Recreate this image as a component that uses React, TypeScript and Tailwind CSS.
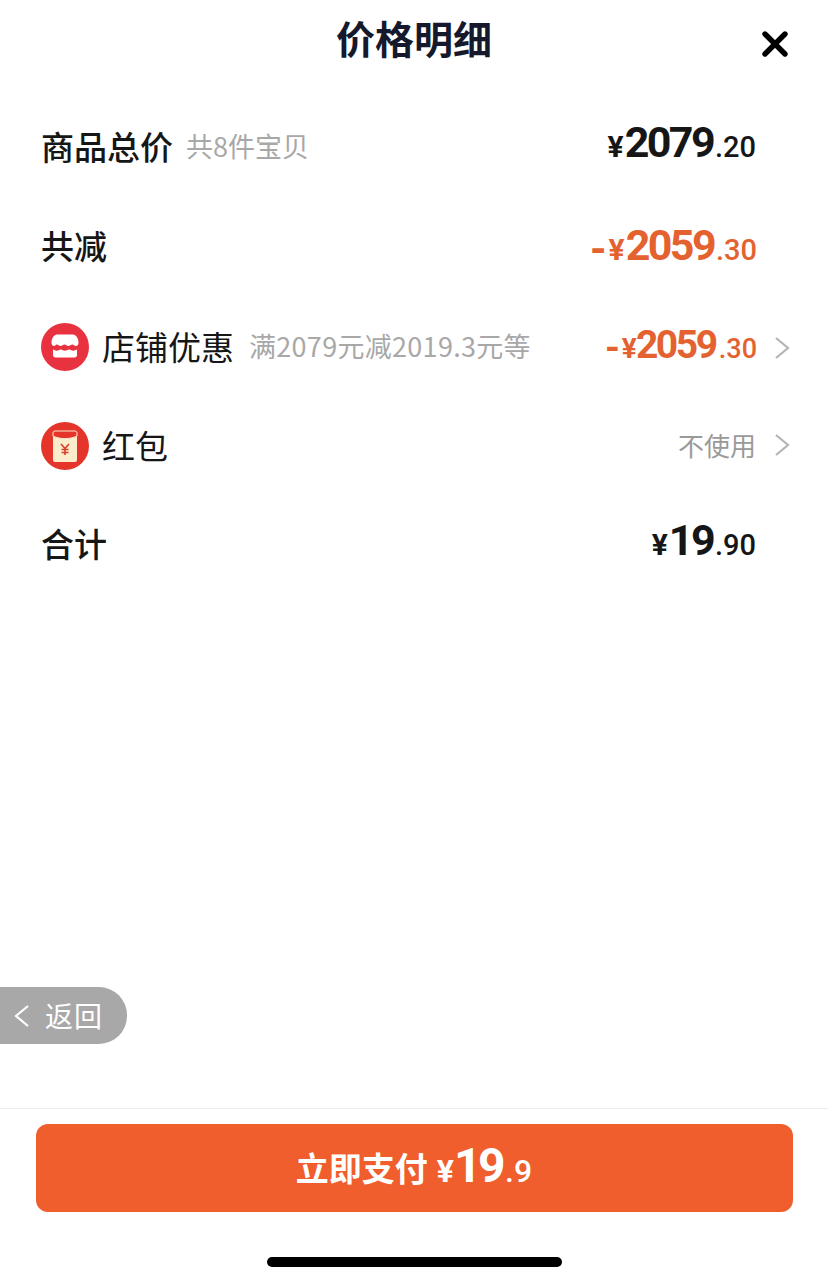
import { X } from "lucide-react"

const cjk = "font-['Noto_Sans_CJK_SC','Noto_Sans',sans-serif]"
const num = "font-['Roboto','Noto_Sans_CJK_SC',sans-serif]"

function Price({ minus, yuan, cents, orange, small }: { minus?: boolean; yuan: string; cents: string; orange?: boolean; small?: boolean }) {
  return (
    <span className={`${num} flex items-baseline font-bold ${orange ? "text-[#e4622f]" : "text-[#161616]"}`}>
      {minus && <span className={small ? "translate-y-[3px] text-[38px] leading-none mr-[2px]" : "translate-y-[4px] text-[42px] leading-none mr-[2px]"}>-</span>}
      <span className={small ? "text-[28px] tracking-[-2px] mr-[1px]" : "text-[30px] tracking-[-2px] mr-[3px]"}>¥</span>
      {small ? (
        <span className="text-[39px] leading-none tracking-[-2.4px]">{yuan}</span>
      ) : (
        <span className="text-[43px] leading-none tracking-[-2.6px]">{yuan}</span>
      )}
      <span className={small ? "ml-[3px] text-[27px] font-medium" : "ml-[2px] text-[29px] font-medium"}>.{cents}</span>
    </span>
  )
}

function Chevron({ left }: { left?: boolean }) {
  return (
    <svg width="16" height="24" viewBox="0 0 16 24" fill="none" stroke="currentColor" strokeWidth="2.200">
      <path d={left ? "M14 2 2 12l12 10" : "M2 2l12 10L2 22"} />
    </svg>
  )
}

function ShopIcon() {
  return (
    <svg width="48" height="48" viewBox="1 1 48 48">
      <circle cx="25" cy="25" r="24" fill="#e8323f" />
      <path d="M17 12.500h16c3 0 5.500 4 5.500 8 0 2-1 3.500-2.500 3.500-1.500 0-2.200-1.600-3.700-1.600s-2.300 1.600-3.900 1.600-2.300-1.600-3.900-1.600-2.300 1.600-3.900 1.600-2.200-1.600-3.700-1.600S15.500 24 14 24c-1.500 0-2.500-1.500-2.500-3.500 0-4 2.500-8 5.500-8z" fill="#fff" />
      <path d="M13 27.500c1.500 0 2 1.300 3.700 1.300s2.300-1.300 4-1.300 2.500 1.300 4.300 1.300 2.500-1.300 4.300-1.300 2.300 1.300 4 1.300 2.200-1.300 3.700-1.300v5.500c0 1.500-1 2.500-2.500 2.500h-19c-1.500 0-2.500-1-2.500-2.500z" fill="#fff" />
    </svg>
  )
}

function PacketIcon() {
  return (
    <svg width="48" height="48" viewBox="1 1 48 48">
      <circle cx="25" cy="25" r="24" fill="#e5352b" />
      <rect x="13" y="10" width="24" height="31" rx="2" fill="#fbeccb" />
      <path d="M13 12c0-1.200.8-2 2-2h20c1.200 0 2 .8 2 2v3c-7 3.500-17 3.500-24 0z" fill="#e5352b" stroke="#fbeccb" strokeWidth="1" />
      <path d="M21 23l4 4.500 4-4.500M25 27.500V34M21.500 28.500h7M21.500 31.500h7" fill="none" stroke="#d8432f" strokeWidth="1.700" />
    </svg>
  )
}

export default function App() {
  return (
    <div className={`${cjk} relative flex h-[1284px] w-[828px] flex-col overflow-hidden bg-white`}>
      {/* Header */}
      <div className="relative flex h-[80px] shrink-0 items-center justify-center">
        <h1 className="mb-[6px] text-[39px] leading-none font-bold text-[#15192b]">价格明细</h1>
        <X className="absolute left-[755px] top-[24px] text-black" size={40} strokeWidth={3.2} />
      </div>

      {/* Rows */}
      <div className="flex flex-col pt-[18px] pl-[41px]">
        <div className="flex h-[100px] items-center justify-between pr-[72px]">
          <div className="mb-[3px] flex items-center gap-[13px]">
            <span className="text-[33px] font-medium text-[#161616]">商品总价</span>
            <span className="text-[27px] text-[#a8a8a8]">共8件宝贝</span>
          </div>
          <div className="-mt-[6px]"><Price yuan="2079" cents="20" /></div>
        </div>

        <div className="flex h-[100px] items-center justify-between pr-[71px]">
          <span className="mb-[4px] text-[33px] font-medium text-[#161616]">共减</span>
          <Price minus yuan="2059" cents="30" orange />
        </div>

        <div className="flex h-[99px] items-center justify-between pr-[38px]">
          <div className="mb-[2px] flex items-center">
            <ShopIcon />
            <span className="ml-[13px] text-[33px] text-[#161616]">店铺优惠</span>
            <span className="ml-[15px] text-[27px] tracking-[0.3px] text-[#a8a8a8]">满2079元减2019.3元等</span>
          </div>
          <div className="flex items-center gap-[17px]">
            <Price minus small yuan="2059" cents="30" orange />
            <span className="text-[#b4b4b4]"><Chevron /></span>
          </div>
        </div>

        <div className="flex h-[99px] items-center justify-between pr-[38px]">
          <div className="mb-[2px] flex items-center">
            <PacketIcon />
            <span className="ml-[13px] text-[33px] text-[#161616]">红包</span>
          </div>
          <div className="mb-[4px] flex items-center gap-[18px]">
            <span className="text-[26px] text-[#9a9a9a]">不使用</span>
            <span className="text-[#b4b4b4]"><Chevron /></span>
          </div>
        </div>

        <div className="flex h-[100px] items-center justify-between pr-[72px]">
          <span className="mb-[5px] text-[33px] font-medium text-[#161616]">合计</span>
          <div className="-mt-[6px]"><Price yuan="19" cents="90" /></div>
        </div>
      </div>

      {/* Back pill floats over the page */}
      <div className="absolute left-0 top-[987px] flex h-[57px] w-[127px] items-center rounded-r-[28px] bg-[#a8a8a8] pl-[14px] text-white">
        <Chevron left />
        <span className="mb-[2px] ml-[15px] text-[28px] tracking-[1px]">返回</span>
      </div>

      {/* Footer */}
      <div className="mt-auto flex h-[176px] shrink-0 flex-col items-center border-t border-[#ececec]">
        <button className="mt-[15px] flex h-[88px] w-[757px] items-center justify-center rounded-[12px] bg-[#ef5e2c] text-white">
          <span className="text-[33px] font-bold">立即支付</span>
          <span className={`${num} ml-[9px] flex items-baseline font-bold`}>
            <span className="mr-[2px] text-[32px] tracking-[-2px]">¥</span>
            <span className="text-[48px] leading-none tracking-[-3.5px]">19</span>
            <span className="ml-[3px] text-[32px] font-medium">.9</span>
          </span>
        </button>
        <div className="mt-[45px] h-[10px] w-[295px] rounded-full bg-black" />
      </div>
    </div>
  )
}
